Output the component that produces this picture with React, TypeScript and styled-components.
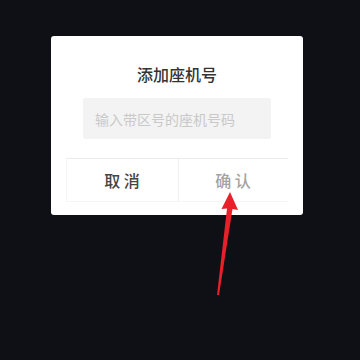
import React from "react";
import styled, { createGlobalStyle } from "styled-components";

const GlobalStyle = createGlobalStyle`
  html, body {
    margin: 0;
    padding: 0;
    background: #0f1015;
  }
  body {
    font-family: "Noto Sans CJK SC", "Noto Sans", sans-serif;
  }
`;

const Screen = styled.div`
  position: relative;
  width: 360px;
  height: 360px;
  background: #0f1015;
  padding: 36px 0 0 51px;
  box-sizing: border-box;
`;

const Dialog = styled.div`
  width: 252px;
  height: 179px;
  background: #ffffff;
  border-radius: 3px;
  display: flex;
  flex-direction: column;
  align-items: center;
  padding-top: 28px;
  box-sizing: border-box;
`;

const Title = styled.div`
  font-size: 16px;
  line-height: 20px;
  font-weight: 500;
  color: #333333;
`;

const Input = styled.input`
  margin-top: 14px;
  width: 188px;
  height: 41px;
  border: none;
  outline: none;
  background: #f3f3f3;
  border-radius: 2px;
  padding: 0 12px;
  box-sizing: border-box;
  font-family: inherit;
  font-size: 14px;
  color: #333;
  &::placeholder {
    color: #c9c9c9;
  }
`;

const ButtonRow = styled.div`
  margin-top: 19px;
  width: 222px;
  height: 44px;
  margin-left: -1px;
  display: grid;
  grid-template-columns: 111px 1fr;
  border-top: 1px solid #ececec;
  border-left: 1px solid #f6f6f6;
  border-bottom: 1px solid #f6f6f6;
  box-sizing: border-box;
`;

const ActionButton = styled.button<{ $muted?: boolean }>`
  border: none;
  background: transparent;
  font-family: inherit;
  font-size: 16px;
  font-weight: 500;
  color: ${(p) => (p.$muted ? "#a3a3a3" : "#454545")};
  border-left: ${(p) => (p.$muted ? "1px solid #efefef" : "none")};
  padding: 0;
  cursor: pointer;
`;

const Arrow = styled.svg`
  position: absolute;
  left: 210px;
  top: 188px;
`;

export default function App() {
  return (
    <>
      <GlobalStyle />
      <Screen>
        <Dialog>
          <Title>添加座机号</Title>
          <Input placeholder="输入带区号的座机号码" />
          <ButtonRow>
            <ActionButton>取 消</ActionButton>
            <ActionButton $muted>确 认</ActionButton>
          </ButtonRow>
        </Dialog>
        <Arrow width="40" height="112" viewBox="0 0 40 112">
          <polygon points="20,4 28,22 22.5,21 9,107 7,107 17,20.5 11.5,21" fill="#e8202a" />
        </Arrow>
      </Screen>
    </>
  );
}
